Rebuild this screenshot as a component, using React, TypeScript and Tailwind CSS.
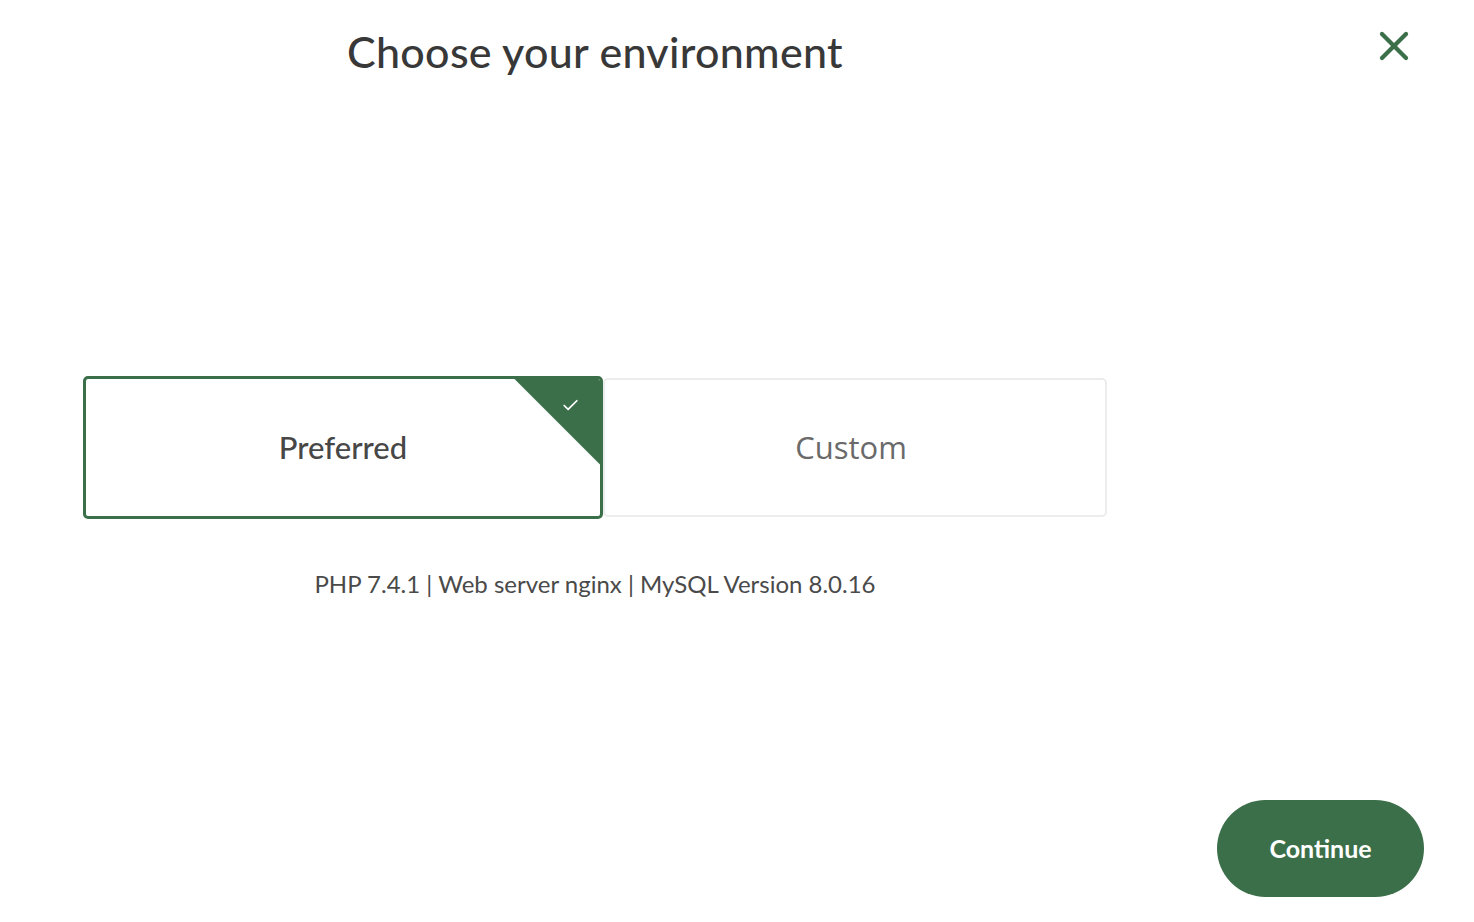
import { Check, X } from 'lucide-react'

const options = [
  { name: 'Preferred', selected: true },
  { name: 'Custom', selected: false },
]

function OptionCard({ name, selected }: { name: string; selected: boolean }) {
  if (selected) {
    return (
      <div className="relative flex h-[143px] w-[520px] items-center justify-center overflow-hidden rounded-[5px] border-[3px] border-[#3b6f49] bg-white">
        <span className="font-['Lato'] text-[31px] font-medium text-[#474747]">{name}</span>
        <div className="absolute right-0 top-0 h-[86px] w-[86px] bg-[#3b6f49] [clip-path:polygon(0_0,100%_0,100%_100%)]" />
        <Check className="absolute right-[20px] top-[17px] h-[19px] w-[19px] text-white" strokeWidth={2.2} />
      </div>
    )
  }
  return (
    <div className="flex h-[139px] w-[504px] items-center justify-center rounded-[5px] border-2 border-[#ececec] bg-white pr-[8px]">
      <span className="font-['Open_Sans'] text-[31px] text-[#6a6a6a]">{name}</span>
    </div>
  )
}

export default function App() {
  return (
    <div className="flex h-[922px] w-[1474px] flex-col bg-white font-['Lato',sans-serif]">
      <header className="flex items-start">
        <div className="ml-[83px] w-[1024px] pt-[20px] text-center">
          <h1 className="font-['Lato'] text-[43px] font-medium tracking-[0.3px] text-[#383838]">Choose your environment</h1>
        </div>
        <button className="ml-auto mr-[56px] mt-[22px] text-[#3b6f49]">
          <X className="h-[48px] w-[48px]" strokeWidth={2.1} />
        </button>
      </header>

      <main className="ml-[83px] mt-[291px] flex w-[1024px] flex-col items-center">
        <div className="flex items-center">
          {options.map((o) => (
            <OptionCard key={o.name} name={o.name} selected={o.selected} />
          ))}
        </div>
        <p className="mt-[47px] font-['Lato'] text-[24px] text-[#4a4a4a]">
          PHP 7.4.1 | Web server nginx | MySQL Version 8.0.16
        </p>
      </main>

      <footer className="mt-auto flex justify-end pb-[25px] pr-[50px]">
        <button className="h-[97px] w-[207px] rounded-full bg-[#3b6f49] font-['Lato'] text-[25px] font-bold text-white">
          Continue
        </button>
      </footer>
    </div>
  )
}
